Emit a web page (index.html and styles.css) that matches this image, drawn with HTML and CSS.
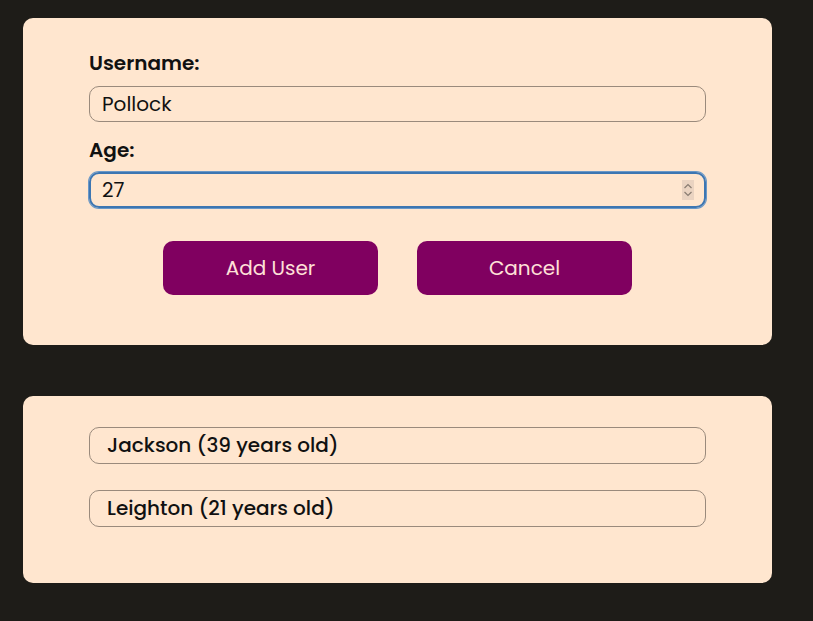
FILE: index.html
```html
<!DOCTYPE html>
<html>
<head>
<meta charset="utf-8">
<link rel="stylesheet" href="styles.css">
</head>
<body>
<div class="page">
  <form class="card form-card">
    <label class="label" for="username">Username:</label>
    <input class="field" id="username" type="text" value="Pollock">
    <label class="label label-age" for="age">Age:</label>
    <div class="field field-focus">
      <input class="field-inner" id="age" type="text" value="27">
      <span class="spinner">
        <svg width="10" height="18" viewBox="0 0 10 18"><path d="M1.5 7 L5 3.5 L8.5 7" fill="none" stroke="#8a7d72" stroke-width="1.2"/><path d="M1.5 11 L5 14.5 L8.5 11" fill="none" stroke="#8a7d72" stroke-width="1.2"/></svg>
      </span>
    </div>
    <div class="actions">
      <button type="button" class="btn">Add User</button>
      <button type="button" class="btn">Cancel</button>
    </div>
  </form>
  <div class="card list-card">
    <ul class="users">
      <li class="user">Jackson (39 years old)</li>
      <li class="user">Leighton (21 years old)</li>
    </ul>
  </div>
</div>
</body>
</html>
```
FILE: styles.css
```css
* { box-sizing: border-box; }
html, body { margin: 0; padding: 0; }
body {
  background: #1e1c18;
  font-family: "Poppins", "Inter", "Noto Sans", sans-serif;
  color: #111;
  width: 813px;
  height: 621px;
  overflow: hidden;
}
.page {
  padding-top: 18px;
  padding-left: 23px;
}
.card {
  width: 749px;
  background: #ffe6cf;
  border-radius: 10px;
}
.form-card {
  padding: 32px 66px 50px;
  margin: 0;
}
.label {
  display: block;
  font-weight: 600;
  font-size: 20px;
  line-height: 27px;
  margin-bottom: 9px;
}
.label-age {
  margin-top: 15px;
  margin-bottom: 8px;
}
.field {
  display: block;
  width: 617px;
  height: 36px;
  border: 1px solid #9a8a7c;
  border-radius: 10px;
  background: transparent;
  font-family: inherit;
  font-size: 20px;
  color: #111;
  padding: 0 12px;
  outline: none;
}
.field-focus {
  display: flex;
  align-items: center;
  border: 2px solid #3d76b2;
  box-shadow: 0 0 0 1px #6a98c8;
  padding: 0 10px 0 11px;
}
.field-inner {
  flex: 1;
  border: none;
  background: transparent;
  font-family: inherit;
  font-size: 20px;
  color: #111;
  padding: 0;
  outline: none;
  min-width: 0;
}
.spinner {
  width: 12px;
  height: 20px;
  background: #ead3c1;
  display: flex;
  align-items: center;
  justify-content: center;
}
.actions {
  display: flex;
  justify-content: center;
  gap: 39px;
  margin-top: 33px;
}
.btn {
  width: 215px;
  height: 54px;
  background: #800060;
  color: #ffe0d8;
  border: none;
  border-radius: 10px;
  font-family: inherit;
  font-size: 20px;
  cursor: pointer;
}
.list-card {
  margin-top: 51px;
  padding: 31px 66px 56px;
}
.users {
  list-style: none;
  margin: 0;
  padding: 0;
  display: flex;
  flex-direction: column;
  gap: 26px;
}
.user {
  height: 37px;
  border: 1px solid #9a8a7c;
  border-radius: 10px;
  padding: 0 17px;
  font-size: 20px;
  font-weight: 500;
  line-height: 35px;
}
```
